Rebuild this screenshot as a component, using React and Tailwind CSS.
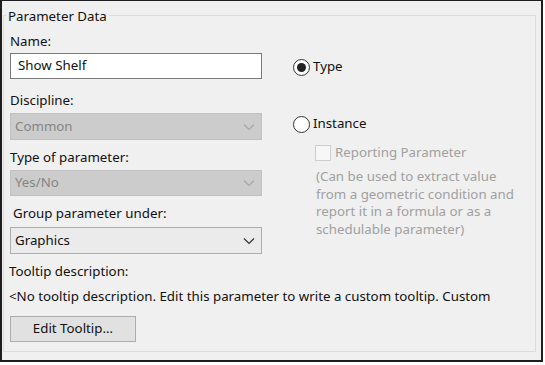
import React from "react";

const font = { fontFamily: '"Noto Sans", "Open Sans", Arial, sans-serif' };

function Chevron({ color }) {
  return (
    <svg width="12" height="8" viewBox="0 0 12 8" className="shrink-0">
      <polyline points="1,1.5 6,6.5 11,1.5" fill="none" stroke={color} strokeWidth="1.2" />
    </svg>
  );
}

function Combo({ value, disabled, className = "" }) {
  return (
    <div
      className={
        "flex items-center justify-between pl-[4px] pr-[6px] border " +
        (disabled
          ? "bg-[#cccccc] border-[#c2c2c2] text-[#858585] "
          : "bg-[#ebebeb] border-[#adadad] text-[#111] ") +
        className
      }
    >
      <span>{value}</span>
      <Chevron color={disabled ? "#a8a8a8" : "#333"} />
    </div>
  );
}

export default function App() {
  return (
    <div className="w-[545px] h-[365px] bg-white text-[13.3px] text-[#111]" style={font}>
      <div className="w-[543px] h-[362px] border-2 border-t border-[#1e1e1e] bg-[#f0f0f0] pt-[14px] pl-[1px] pr-[5px] pb-[8px]">
        <div className="relative h-full border border-[#dcdcdc] flex pl-[6px]">
          <span className="absolute left-[2px] top-[-10px] h-[20px] leading-[20px] px-[2px] bg-[#f0f0f0]">
            Parameter Data
          </span>

          {/* left column */}
          <div className="w-[252px] flex flex-col shrink-0">
            <div className="mt-[15px] h-[20px] leading-[20px]">Name:</div>
            <div className="mt-[2px] h-[26px] bg-white border border-[#7a7a7a] flex items-center pl-[7px]">
              Show Shelf
            </div>
            <div className="mt-[11px] h-[20px] leading-[20px]">Discipline:</div>
            <Combo value="Common" disabled className="mt-[3px] h-[27px]" />
            <div className="mt-[7px] h-[20px] leading-[20px]">Type of parameter:</div>
            <Combo value="Yes/No" disabled className="mt-[3px] h-[26px]" />
            <div className="mt-[7px] h-[20px] leading-[20px] pl-[3px]">Group parameter under:</div>
            <Combo value="Graphics" className="mt-[4px] h-[27px]" />
            <div className="mt-[7px] h-[20px] leading-[20px] ml-[-1px]">Tooltip description:</div>
            <div className="mt-[5px] h-[20px] leading-[20px] ml-[-1px] whitespace-nowrap">
              &lt;No tooltip description. Edit this parameter to write a custom tooltip. Custom
            </div>
            <div className="mt-[10px] w-[126px] h-[26px] bg-[#e1e1e1] border border-[#adadad] flex items-center justify-center">
              Edit Tooltip...
            </div>
          </div>

          {/* right column */}
          <div className="ml-[31px] flex flex-col">
            <div className="mt-[41px] h-[20px] flex items-center gap-[3px]">
              <span className="w-[17px] h-[17px] rounded-full border-[1.5px] border-[#333] bg-white flex items-center justify-center">
                <span className="w-[9px] h-[9px] rounded-full bg-[#222]" />
              </span>
              <span>Type</span>
            </div>
            <div className="mt-[37px] h-[20px] flex items-center gap-[3px]">
              <span className="w-[17px] h-[17px] rounded-full border-[1.5px] border-[#333] bg-white" />
              <span>Instance</span>
            </div>
            <div className="mt-[9px] h-[20px] flex items-center gap-[4px] pl-[22px] text-[#a0a0a0]">
              <span className="w-[16px] h-[16px] border border-[#cfcfcf] bg-[#f7f7f7]" />
              <span>Reporting Parameter</span>
            </div>
            <div className="mt-[5px] pl-[23px] w-[232px] leading-[17.5px] text-[#a0a0a0]">
              (Can be used to extract value from a geometric condition and report it in a formula or as a
              schedulable parameter)
            </div>
          </div>
        </div>
      </div>
    </div>
  );
}
